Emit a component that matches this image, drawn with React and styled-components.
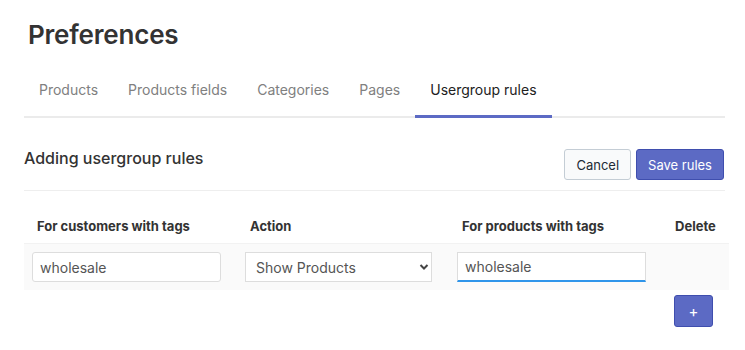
import React, { useEffect, useRef } from 'react';
import styled, { createGlobalStyle } from 'styled-components';

const GlobalStyle = createGlobalStyle`
  body {
    margin: 0;
    background: #ffffff;
    font-family: Inter, "Noto Sans", "Liberation Sans", sans-serif;
    color: #333333;
  }
`;

const Page = styled.div`
  width: 701px;
  padding: 0 20px 0 24px;
`;

const Title = styled.h1`
  margin: 0;
  padding: 19px 0 0 4px;
  font-size: 26px;
  line-height: 32px;
  font-weight: 600;
  color: #333333;
  letter-spacing: -0.2px;
`;

const TabBar = styled.div`
  display: flex;
  margin-top: 27px;
  border-bottom: 2px solid #ebebeb;
`;

const Tab = styled.div`
  padding: 0 15px 1px;
  height: 40px;
  line-height: 24px;
  font-size: 14px;
  color: ${p => (p.active ? '#212121' : '#808080')};
  margin-bottom: -2px;
  border-bottom: 3px solid ${p => (p.active ? '#5c6ac4' : 'transparent')};
  box-sizing: border-box;
`;

const SectionHead = styled.div`
  display: flex;
  justify-content: space-between;
  align-items: flex-start;
  padding: 31px 0 10px;
  border-bottom: 1px solid #eeeeee;
`;

const SectionTitle = styled.h2`
  margin: 0;
  font-size: 16px;
  line-height: 18px;
  font-weight: 500;
  color: #333333;
`;

const ButtonRow = styled.div`
  display: flex;
  gap: 5px;
  margin-right: 1px;
`;

const Button = styled.button`
  font-family: inherit;
  font-size: 13px;
  height: 31px;
  padding: 0 11px;
  border-radius: 3px;
  cursor: pointer;
  border: 1px solid ${p => (p.primary ? '#3f4eae' : '#c4cdd5')};
  background: ${p => (p.primary ? '#5c6ac4' : '#f9fafb')};
  color: ${p => (p.primary ? '#ffffff' : '#212b36')};
`;

const Table = styled.div`
  display: grid;
  grid-template-columns: 213px 212px 213px 1fr;
`;

const HeadCell = styled.div`
  padding: 27px 13px 9px;
  font-size: 13px;
  line-height: 16px;
  font-weight: 700;
  color: #333333;
  border-bottom: 1px solid #f2f2f2;
  white-space: nowrap;
`;

const Cell = styled.div`
  padding: 8px;
  background: #fafafa;
`;

const TextInput = styled.input`
  box-sizing: border-box;
  width: 189px;
  height: 30px;
  padding: 0 7px;
  font-family: inherit;
  font-size: 14px;
  color: #555555;
  background: #ffffff;
  border: 1px solid #dddddd;
  border-bottom: ${p => (p.focused ? '2px solid #2f95ea' : '1px solid #dddddd')};
  border-radius: ${p => (p.focused ? '0' : '3px')};
  outline: none;
`;

const SelectWrap = styled.div`
  position: relative;
  width: 187px;
`;

const Select = styled.select`
  box-sizing: border-box;
  width: 187px;
  height: 30px;
  padding: 0 10px;
  appearance: none;
  font-family: inherit;
  font-size: 14px;
  color: #555555;
  background: #ffffff;
  border: 1px solid #dddddd;
  border-radius: 0;
  outline: none;
`;

const Chevron = styled.svg`
  position: absolute;
  right: 3px;
  top: 11px;
  pointer-events: none;
`;

const Footer = styled.div`
  display: flex;
  justify-content: flex-end;
  padding: 5px 12px 0 0;
`;

const AddButton = styled(Button)`
  width: 39px;
  height: 32px;
  padding: 0;
  font-size: 15px;
`;

export default function App() {
  const ref = useRef(null);
  useEffect(() => {
    const el = ref.current;
    if (el) {
      el.focus();
      el.setSelectionRange(el.value.length, el.value.length);
    }
  }, []);

  const tabs = ['Products', 'Products fields', 'Categories', 'Pages', 'Usergroup rules'];

  return (
    <>
      <GlobalStyle />
      <Page>
        <Title>Preferences</Title>
        <TabBar>
          {tabs.map(t => (
            <Tab key={t} active={t === 'Usergroup rules'}>{t}</Tab>
          ))}
        </TabBar>
        <SectionHead>
          <SectionTitle>Adding usergroup rules</SectionTitle>
          <ButtonRow>
            <Button>Cancel</Button>
            <Button primary>Save rules</Button>
          </ButtonRow>
        </SectionHead>
        <Table>
          <HeadCell>For customers with tags</HeadCell>
          <HeadCell>Action</HeadCell>
          <HeadCell>For products with tags</HeadCell>
          <HeadCell>Delete</HeadCell>
          <Cell>
            <TextInput defaultValue="wholesale" />
          </Cell>
          <Cell>
            <SelectWrap>
              <Select defaultValue="show">
                <option value="show">Show Products</option>
                <option value="hide">Hide Products</option>
              </Select>
              <Chevron width="10" height="8" viewBox="0 0 10 8">
                <path d="M1.5 2l3.5 3.5L8.5 2" fill="none" stroke="#444" strokeWidth="2" />
              </Chevron>
            </SelectWrap>
          </Cell>
          <Cell>
            <TextInput ref={ref} focused defaultValue="wholesale" />
          </Cell>
          <Cell />
        </Table>
        <Footer>
          <AddButton primary>+</AddButton>
        </Footer>
      </Page>
    </>
  );
}
